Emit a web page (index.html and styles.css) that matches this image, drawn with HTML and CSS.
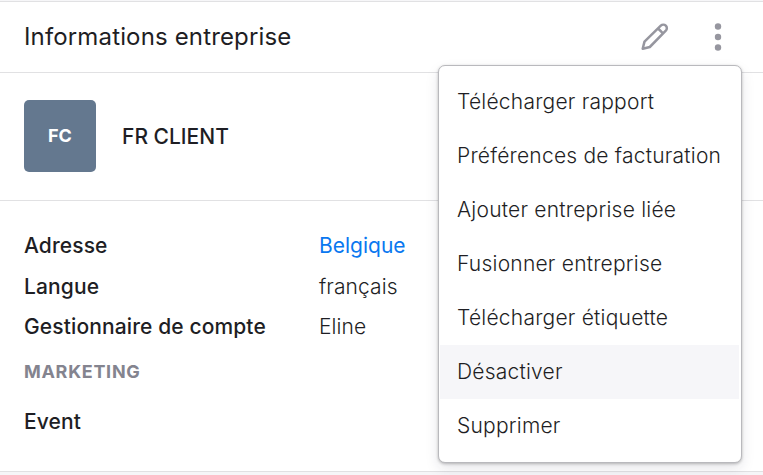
FILE: index.html
```html
<!DOCTYPE html>
<html lang="fr">
  <head>
    <meta charset="UTF-8" />
    <meta name="viewport" content="width=device-width, initial-scale=1.0" />
    <title>Informations entreprise</title>
    <link rel="stylesheet" href="styles.css">
  </head>

  <body>
    <section class="card">
      <header class="card-header">
        <h1>Informations entreprise</h1>
        <div class="actions">
          <button class="edit" aria-label="Modifier">
            <svg width="30" height="30" viewBox="0 0 30 30" fill="none" stroke="#96969f" stroke-width="2.5" stroke-linejoin="round">
              <path d="M2.7 26.8 L4.5 19.6 L20.8 3.7 A3.5 3.5 0 0 1 25.8 8.7 L9.8 25 Z" />
              <path d="M18.1 6.5 L23 11.4" />
            </svg>
          </button>
          <button class="more" aria-label="Plus">
            <svg width="8" height="30" viewBox="0 0 8 30" fill="#96969f">
              <circle cx="4" cy="4.5" r="3.2" />
              <circle cx="4" cy="15" r="3.2" />
              <circle cx="4" cy="25.5" r="3.2" />
            </svg>
          </button>
          <ul class="menu">
            <li>Télécharger rapport</li>
            <li>Préférences de facturation</li>
            <li>Ajouter entreprise liée</li>
            <li>Fusionner entreprise</li>
            <li>Télécharger étiquette</li>
            <li class="active">Désactiver</li>
            <li>Supprimer</li>
          </ul>
        </div>
      </header>

      <div class="company">
        <div class="avatar">FC</div>
        <h2>FR CLIENT</h2>
      </div>

      <div class="details">
        <dl>
          <dt>Adresse</dt>
          <dd><a href="#">Belgique</a></dd>
          <dt>Langue</dt>
          <dd>français</dd>
          <dt>Gestionnaire de compte</dt>
          <dd>Eline</dd>
        </dl>
        <h3>Marketing</h3>
        <p class="event">Event</p>
      </div>
    </section>
  </body>
</html>
```
FILE: styles.css
```css
* {
  box-sizing: border-box;
}

body {
  margin: 0;
  padding-top: 1px;
  height: 475px;
  overflow: hidden;
  background-color: #f6f6f8;
  color: #1e1e24;
  font-family: Inter, "Liberation Sans", sans-serif;
  font-size: 21px;
}

h1, h2, h3, p, dl, dd, ul {
  margin: 0;
  padding: 0;
}

.card {
  height: 471px;
  background-color: white;
  border-top: 1px solid #e1e1e3;
  border-bottom: 1px solid #e1e1e3;
}

.card-header {
  display: flex;
  justify-content: space-between;
  align-items: center;
  height: 71px;
  padding: 0 41px 0 24px;
  border-bottom: 1px solid #e1e1e3;
}

h1 {
  padding-bottom: 2px;
  font-size: 24px;
  font-weight: 400;
  letter-spacing: 0.15px;
}

.actions {
  position: relative;
  display: flex;
  align-items: center;
  gap: 44px;
}

button {
  display: block;
  padding: 0;
  border: 0;
  background: none;
  cursor: pointer;
}

svg {
  display: block;
}

.menu {
  position: absolute;
  top: 43px;
  right: -20px;
  width: 304px;
  height: 398px;
  padding: 9px 2px 0 1px;
  list-style: none;
  background-color: white;
  border: 1px solid #b9b9bd;
  border-radius: 7px;
  box-shadow: 0 1px 3px rgba(0, 0, 0, 0.25), 0 6px 14px rgba(30, 30, 60, 0.1);
}

.menu li {
  height: 54px;
  padding-left: 17px;
  line-height: 54px;
  font-weight: 300;
  letter-spacing: 0.22px;
  font-variant-ligatures: none;
  white-space: nowrap;
  cursor: pointer;
}

.menu .active {
  background-color: #f6f6f9;
}

.company {
  display: flex;
  align-items: center;
  gap: 26px;
  height: 128px;
  padding: 0 24px 1px;
  border-bottom: 1px solid #e1e1e3;
}

.avatar {
  width: 72px;
  height: 72px;
  line-height: 72px;
  border-radius: 5px;
  background-color: #64788f;
  color: white;
  text-align: center;
  font-size: 18px;
  font-weight: 700;
}

h2 {
  padding-top: 1px;
  font-size: 21px;
  font-weight: 500;
}

.details {
  padding: 25px 24px;
}

dl {
  display: grid;
  grid-template-columns: 295px 1fr;
  grid-auto-rows: 40.5px;
  line-height: 40px;
}

dt, .event {
  font-weight: 550;
  letter-spacing: 0.12px;
}

dd {
  font-weight: 300;
  letter-spacing: 0.1px;
}

a {
  color: #0a78f0;
  font-weight: 400;
  letter-spacing: 0;
  text-decoration: none;
}

h3 {
  margin-top: 12px;
  color: #84848f;
  font-size: 18px;
  font-weight: 700;
  line-height: 24px;
  letter-spacing: 0.7px;
  text-transform: uppercase;
}

.event {
  margin-top: 18px;
  line-height: 40px;
}
```
